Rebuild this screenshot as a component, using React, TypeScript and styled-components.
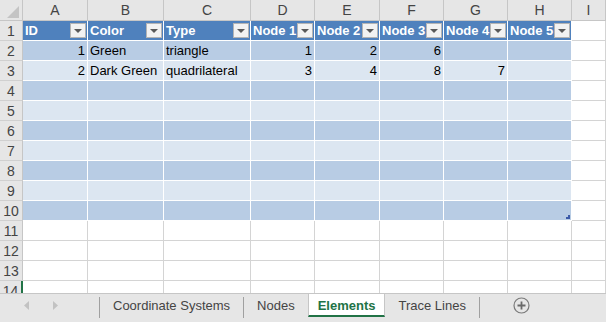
import React from 'react'
import styled, { createGlobalStyle } from 'styled-components'

const Global = createGlobalStyle`
  html, body { margin: 0; padding: 0; background: #fff; }
  * { box-sizing: border-box; }
`

const cols = ['A', 'B', 'C', 'D', 'E', 'F', 'G', 'H', 'I']
const headers = ['ID', 'Color', 'Type', 'Node 1', 'Node 2', 'Node 3', 'Node 4', 'Node 5']
type Val = { v: string; num?: boolean }
const rows: Val[][] = [
  [{ v: '1', num: true }, { v: 'Green' }, { v: 'triangle' }, { v: '1', num: true }, { v: '2', num: true }, { v: '6', num: true }, { v: '' }, { v: '' }],
  [{ v: '2', num: true }, { v: 'Dark Green' }, { v: 'quadrilateral' }, { v: '3', num: true }, { v: '4', num: true }, { v: '8', num: true }, { v: '7', num: true }, { v: '' }],
]
const tableRows = 10
const totalRows = 14

const Frame = styled.div`
  width: 606px;
  height: 322px;
  display: flex;
  flex-direction: column;
  overflow: hidden;
  background: #fff;
  font-family: "Liberation Sans", Arial, sans-serif;
`

const Sheet = styled.div`
  flex: 1;
  min-height: 0;
  overflow: hidden;
  display: grid;
  grid-template-columns: 23px 65px 76px 87px 64px 65px 64px 64px 64px 1fr;
  grid-template-rows: 21px;
  grid-auto-rows: 20px;
  align-content: start;
`

const Corner = styled.div`
  position: relative;
  background: #e6e6e6;
  border-right: 1px solid #c6c6c6;
  border-bottom: 1px solid #c6c6c6;
  &::after {
    content: '';
    position: absolute;
    right: 3px;
    bottom: 2px;
    width: 12px;
    height: 12px;
    background: #c4c4c4;
    clip-path: polygon(100% 0, 100% 100%, 0 100%);
  }
`

const ColHead = styled.div`
  background: #e6e6e6;
  border-right: 1px solid #c6c6c6;
  border-bottom: 1px solid #c6c6c6;
  color: #444;
  font-size: 14px;
  display: flex;
  align-items: center;
  justify-content: center;
`

const RowHead = styled.div<{ $selected?: boolean }>`
  background: #e6e6e6;
  border-right: ${(p) => (p.$selected ? '2px solid #217346' : '1px solid #c6c6c6')};
  border-bottom: 1px solid #d0d0d0;
  color: #444;
  font-size: 14px;
  display: flex;
  align-items: center;
  justify-content: center;
`

const HeadCell = styled.div`
  position: relative;
  background: #4f81bd;
  border-right: 1px solid #fff;
  border-bottom: 1px solid #fff;
  color: #fff;
  font-weight: bold;
  font-size: 13px;
  line-height: 20px;
  padding-left: 2px;
  white-space: nowrap;
  overflow: hidden;
`

const Filter = styled.span`
  position: absolute;
  top: 2px;
  right: 1px;
  width: 16px;
  height: 15px;
  background: #f2f2f2;
  border: 1px solid #b4b4b4;
  display: flex;
  align-items: center;
  justify-content: center;
  &::after {
    content: '';
    width: 0;
    height: 0;
    border-left: 4px solid transparent;
    border-right: 4px solid transparent;
    border-top: 4px solid #595959;
  }
`

const DataCell = styled.div<{ $band: boolean; $num?: boolean }>`
  position: relative;
  background: ${(p) => (p.$band ? '#b8cce4' : '#dce6f1')};
  border-right: 1px solid #fff;
  border-bottom: 1px solid #fff;
  color: #000;
  font-size: 13px;
  line-height: 20px;
  padding: 0 2px;
  white-space: nowrap;
  overflow: hidden;
  text-align: ${(p) => (p.$num ? 'right' : 'left')};
`

const Resize = styled.span`
  position: absolute;
  right: 1px;
  bottom: 1px;
  width: 4px;
  height: 4px;
  background: #3c5aa8;
  clip-path: polygon(100% 0, 100% 100%, 0 100%, 0 50%, 50% 50%, 50% 0);
`

const Empty = styled.div`
  border-right: 1px solid #d4d4d4;
  border-bottom: 1px solid #d4d4d4;
`

const TabBar = styled.div`
  flex: none;
  height: 29px;
  background: #e6e6e6;
  border-top: 1px solid #c6c6c6;
  display: flex;
  align-items: flex-start;
  color: #444;
  font-size: 13px;
`

const Nav = styled.div`
  width: 99px;
  height: 23px;
  display: flex;
  align-items: center;
  padding-left: 24px;
  gap: 22px;
`

const Sep = styled.span`
  flex: none;
  width: 1px;
  height: 21px;
  margin-top: 3px;
  background: #a0a0a0;
`

const Tab = styled.div<{ $active?: boolean }>`
  height: 23px;
  display: flex;
  align-items: center;
  padding: 0 ${(p) => (p.$active ? '9px' : '13px')};
  white-space: nowrap;
  background: ${(p) => (p.$active ? '#fff' : 'transparent')};
  color: ${(p) => (p.$active ? '#217346' : '#444')};
  font-weight: ${(p) => (p.$active ? 'bold' : 'normal')};
  border-left: ${(p) => (p.$active ? '1px solid #c6c6c6' : 'none')};
  border-right: ${(p) => (p.$active ? '1px solid #c6c6c6' : 'none')};
  border-bottom: ${(p) => (p.$active ? '2px solid #217346' : 'none')};
  padding-top: ${(p) => (p.$active ? '2px' : '0')};
`

const AddSheet = styled.div`
  margin-left: 33px;
  height: 23px;
  display: flex;
  align-items: center;
`

function Arrow({ dir }: { dir: 'left' | 'right' }) {
  return (
    <svg width="6" height="9" viewBox="0 0 6 9">
      {dir === 'left' ? <polygon points="5,0 5,9 0,4.5" fill="#c2c2c2" /> : <polygon points="1,0 1,9 6,4.5" fill="#c2c2c2" />}
    </svg>
  )
}

export default function App() {
  const cells: React.ReactNode[] = []
  cells.push(<Corner key="corner" />)
  cols.forEach((c) => cells.push(<ColHead key={'ch' + c}>{c}</ColHead>))

  for (let r = 1; r <= totalRows; r++) {
    cells.push(
      <RowHead key={'rh' + r} $selected={r === 14}>
        {r}
      </RowHead>
    )
    for (let c = 0; c < 8; c++) {
      const key = `c${r}-${c}`
      if (r === 1) {
        cells.push(
          <HeadCell key={key}>
            {headers[c]}
            <Filter />
          </HeadCell>
        )
      } else if (r <= tableRows) {
        const val = rows[r - 2]?.[c]
        cells.push(
          <DataCell key={key} $band={r % 2 === 0} $num={val?.num}>
            {val?.v}
            {r === tableRows && c === 7 && <Resize />}
          </DataCell>
        )
      } else {
        cells.push(<Empty key={key} />)
      }
    }
    cells.push(<Empty key={`c${r}-i`} />)
  }

  return (
    <Frame>
      <Global />
      <Sheet>{cells}</Sheet>
      <TabBar>
        <Nav>
          <Arrow dir="left" />
          <Arrow dir="right" />
        </Nav>
        <Sep />
        <Tab>Coordinate Systems</Tab>
        <Sep />
        <Tab>Nodes</Tab>
        <Tab $active>Elements</Tab>
        <Tab>Trace Lines</Tab>
        <Sep />
        <AddSheet>
          <svg width="17" height="17" viewBox="0 0 17 17">
            <circle cx="8.5" cy="8.5" r="7.5" fill="none" stroke="#7a7a7a" strokeWidth="1.2" />
            <path d="M8.5 4.5v8M4.5 8.5h8" stroke="#6a6a6a" strokeWidth="1.8" />
          </svg>
        </AddSheet>
      </TabBar>
    </Frame>
  )
}
